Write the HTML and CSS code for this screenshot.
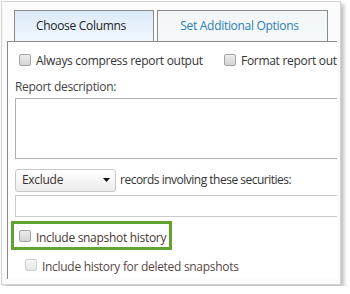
FILE: index.html
```html
<!DOCTYPE html>
<html lang="en">
<head>
  <meta charset="UTF-8">
  <title>Report Options</title>
  <link rel="stylesheet" href="styles.css">
</head>
<body>
  <div class="frame">
    <div class="tabs">
      <div class="tab active">Choose Columns</div>
      <div class="tab">Set Additional Options</div>
    </div>
    <div class="panel">
      <div class="opts">
        <label class="check first"><input type="checkbox" class="cb">Always compress report output</label>
        <label class="check"><input type="checkbox" class="cb">Format report output</label>
      </div>
      <div class="field-label">Report description:</div>
      <textarea class="desc"></textarea>
      <div class="filter">
        <div class="select">
          <span>Exclude</span>
          <svg width="7" height="4" viewBox="0 0 7 4"><path d="M0 0h7L3.5 4z" fill="#111"/></svg>
        </div>
        <span class="filter-text">records involving these securities:</span>
      </div>
      <input type="text" class="securities">
      <div class="highlight">
        <label class="check"><input type="checkbox" class="cb">Include snapshot history</label>
      </div>
      <label class="check sub disabled"><input type="checkbox" class="cb" disabled>Include history for deleted snapshots</label>
    </div>
  </div>
</body>
</html>
```

FILE: styles.css
```css
body {
  margin: 0;
  background-color: #fff;
  font-family: "Open Sans", "Noto Sans", sans-serif;
  font-size: 12px;
  letter-spacing: -0.3px;
  line-height: 16px;
  color: #333;
}
.frame {
  margin: 1px;
  width: 338px;
  height: 282px;
  border: 1px solid #d2d2d2;
  background-color: #fbfbfb;
  box-shadow: 3px 3px 4px rgba(0,0,0,0.25);
  overflow: hidden;
}
.tabs {
  display: flex;
  gap: 3px;
  margin: 8px 0 0 12px;
}
.tab {
  height: 30px;
  border: 1px solid #8a8a8a;
  border-bottom: none;
  box-sizing: content-box;
  display: flex;
  align-items: center;
  justify-content: center;
  padding-right: 6px;
  color: #2d7db3;
  background: linear-gradient(#f2f6f7, #f6f9fa);
}
.tab:first-child {
  width: 132px;
}
.tab:last-child {
  width: 163px;
}
.tab.active {
  color: #222;
  background: linear-gradient(#dceaf8, #f1f7fd);
}
.panel {
  margin-left: 5px;
  width: 330px;
  height: 238px;
  border-top: 1px solid #8a8a8a;
  border-left: 1px solid #8a8a8a;
  background-color: #fff;
  padding: 11px 0 0 7px;
  box-sizing: border-box;
  overflow: hidden;
  white-space: nowrap;
}
.opts {
  display: flex;
}
.check {
  display: flex;
  align-items: flex-start;
  height: 16px;
}
.check.first {
  width: 205px;
  flex-shrink: 0;
}
.cb {
  appearance: none;
  width: 12px;
  height: 12px;
  margin: 1px 5px 0 4px;
  border: 1px solid #a3a3a3;
  border-radius: 2px;
  background: linear-gradient(#ececec, #d4d4d4);
  box-sizing: border-box;
  flex-shrink: 0;
}
.field-label {
  margin-top: 10px;
  color: #444;
}
.desc {
  display: block;
  margin: 3px 0 0;
  width: 360px;
  height: 61px;
  border: 1px solid #b0b0b0;
  padding: 0;
  resize: none;
  box-sizing: border-box;
}
.filter {
  display: flex;
  align-items: center;
  margin-top: 10px;
  height: 23px;
}
.select {
  width: 101px;
  height: 23px;
  box-sizing: border-box;
  border: 1px solid #c8c8c8;
  border-radius: 3px;
  background: linear-gradient(#fff, #ececec);
  display: flex;
  align-items: center;
  justify-content: space-between;
  padding: 0 5px 1px 6px;
  color: #3a2f2c;
}
.filter-text {
  margin-left: 4px;
  padding-bottom: 1px;
  letter-spacing: -0.5px;
}
.securities {
  display: block;
  margin: 3px 0 0;
  width: 360px;
  height: 22px;
  border: 1px solid #cacaca;
  padding: 0;
  box-sizing: border-box;
}
.highlight {
  margin: 4px 0 0 -4px;
  width: 161px;
  height: 29px;
  border: 3px solid #62a233;
  box-sizing: border-box;
  padding: 6px 0 0 1px;
}
.highlight .check {
  color: #4a3531;
}
.highlight .cb {
  margin-top: 0;
}
.check.sub {
  margin: 9px 0 0 6px;
  color: #5a4743;
}
.check.sub .cb {
  margin-top: 0;
  border-color: #cfcfcf;
  background: linear-gradient(#f6f6f6, #e6e6e6);
}
```
